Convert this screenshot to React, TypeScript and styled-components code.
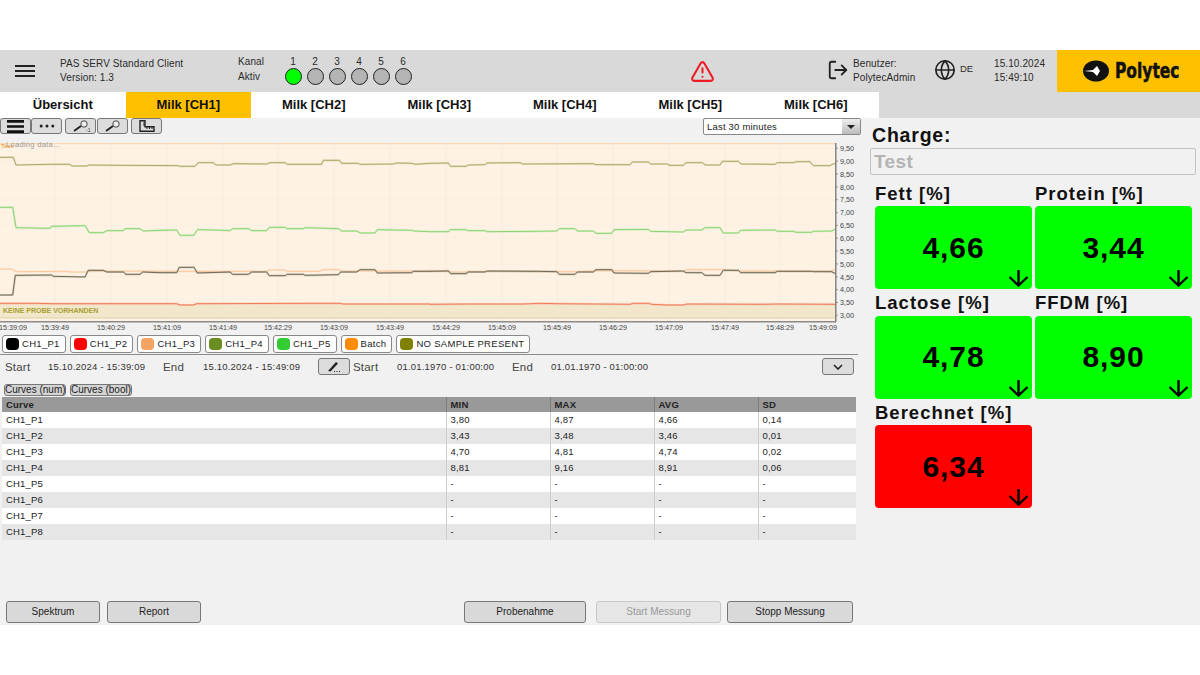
import React from 'react';
import styled, { createGlobalStyle } from 'styled-components';
import { LogOut, Globe, TriangleAlert } from 'lucide-react';

const GlobalStyle = createGlobalStyle`
  html, body {
    margin: 0;
    background: #fff;
    font-family: "Liberation Sans", Arial, sans-serif;
  }
  * { box-sizing: border-box; }
`;

const Frame = styled.div`
  width: 1200px;
  height: 575px;
  margin-top: 50px;
  background: #f1f1f1;
  display: flex;
  flex-direction: column;
  overflow: hidden;
`;

/* ---- header ---- */
const Header = styled.header`
  height: 42px;
  flex: none;
  display: flex;
  align-items: stretch;
  background: #d9d9d9;
  color: #2a2a2a;
  font-size: 10px;
  > * { flex: none; }
`;
const Burger = styled.div`
  width: 60px;
  padding: 15px 0 0 15px;
  span {
    display: block;
    width: 20px;
    height: 2px;
    background: #222;
    margin-bottom: 3px;
  }
`;
const InfoBlock = styled.div<{ $w: number; $pt?: number; $lh?: number }>`
  width: ${(p) => p.$w}px;
  padding-top: ${(p) => p.$pt ?? 7}px;
  line-height: ${(p) => p.$lh ?? 14}px;
  letter-spacing: 0.1px;
  white-space: nowrap;
`;
const Channels = styled.div`
  width: 132px;
  padding-top: 6px;
  display: grid;
  grid-template-columns: repeat(6, 22px);
  justify-content: start;
  align-content: start;
  justify-items: center;
  line-height: 12px;
`;
const Lamp = styled.i<{ $on?: boolean }>`
  display: block;
  width: 17px;
  height: 17px;
  border-radius: 50%;
  border: 1.5px solid #222;
  background: ${(p) => (p.$on ? '#00ff00' : '#b4b4b4')};
`;
const WarnSlot = styled.div`
  width: 413px;
  padding: 9px 0 0 276px;
  color: #ee1c25;
`;
const IconSlot = styled.div<{ $w: number; $pt: number }>`
  width: ${(p) => p.$w}px;
  padding-top: ${(p) => p.$pt}px;
  color: #222;
`;
const Lang = styled.div`
  width: 34px;
  padding-top: 13px;
  line-height: 12px;
  font-size: 9.5px;
`;
const Logo = styled.div`
  width: 143px;
  background: #ffc000;
  display: flex;
  align-items: center;
  padding-left: 26px;
  gap: 6px;
`;
const LogoText = styled.span`
  font-family: "DejaVu Sans Condensed", "DejaVu Sans", sans-serif;
  font-weight: 700;
  font-size: 21px;
  color: #111;
  -webkit-text-stroke: 0.5px #111;
  display: inline-block;
  transform: scaleX(0.82);
  transform-origin: left center;
`;

/* ---- tabs ---- */
const TabBar = styled.nav`
  height: 26px;
  flex: none;
  display: flex;
  background: #d9d9d9;
`;
const Tab = styled.div<{ $active?: boolean }>`
  width: 125.5px;
  background: ${(p) => (p.$active ? '#ffc000' : '#fff')};
  color: #111;
  font-weight: 700;
  font-size: 13px;
  text-align: center;
  line-height: 25px;
`;

/* ---- main ---- */
const Main = styled.main`
  flex: 1;
  display: flex;
  min-height: 0;
`;
const LeftCol = styled.section`
  width: 862px;
  flex: none;
  display: flex;
  flex-direction: column;
`;
const Toolbar = styled.div`
  height: 17px;
  flex: none;
  display: flex;
  justify-content: space-between;
`;
const ToolGroup = styled.div`
  display: flex;
`;
const ToolButton = styled.div<{ $gap?: number }>`
  width: 31px;
  height: 16px;
  margin-left: ${(p) => p.$gap ?? 0}px;
  border: 1px solid #777;
  border-radius: 3px;
  background: #dcdcdc;
  display: flex;
  align-items: center;
  justify-content: center;
`;
const SelectBox = styled.div`
  width: 158px;
  height: 17px;
  margin-right: 1px;
  border: 1px solid #888;
  border-radius: 2px;
  background: #fff;
  display: flex;
  justify-content: space-between;
  font-size: 9.5px;
  line-height: 15px;
  padding-left: 3px;
  color: #222;
  letter-spacing: 0.2px;
`;
const SelectArrow = styled.span`
  width: 18px;
  background: linear-gradient(#eee, #bbb);
  display: flex;
  align-items: center;
  justify-content: center;
  &::after {
    content: '';
    border: 4px solid transparent;
    border-top: 4px solid #222;
    border-bottom: 0;
  }
`;

/* ---- chart ---- */
const ChartBox = styled.div`
  position: relative;
  height: 200px;
  flex: none;
`;
const ChartSvg = styled.svg`
  display: block;
  text {
    font-family: "Liberation Sans", Arial, sans-serif;
  }
`;
const Loading = styled.span`
  position: absolute;
  left: 6px;
  top: 5px;
  font-size: 7.5px;
  color: #999;
  letter-spacing: 0.3px;
`;
const ChartTag = styled.span`
  position: absolute;
  left: 1px;
  top: 8px;
  font-size: 6px;
  font-weight: 700;
  color: #f6a545;
`;

/* ---- legend ---- */
const Legend = styled.div`
  height: 20px;
  flex: none;
  display: flex;
  align-items: flex-start;
  gap: 4px;
  padding-left: 2px;
  border-bottom: 1px solid #8c8c8c;
  width: 858px;
`;
const LegendItem = styled.div`
  height: 18px;
  padding: 0 5px 1px 3px;
  display: flex;
  align-items: center;
  gap: 3px;
  background: #fff;
  border: 1px solid #888;
  border-radius: 3px;
  font-size: 9.5px;
  letter-spacing: 0.3px;
  color: #222;
  white-space: nowrap;
`;
const Swatch = styled.i<{ $c: string }>`
  width: 13px;
  height: 12px;
  border-radius: 4px;
  background: ${(p) => p.$c};
`;

/* ---- range row ---- */
const RangeRow = styled.div`
  height: 25px;
  flex: none;
  display: flex;
  align-items: center;
  padding: 0 8px 2px 5px;
  color: #333;
`;
const RangeLabel = styled.span<{ $w: number }>`
  width: ${(p) => p.$w}px;
  font-size: 11.5px;
  color: #444;
  letter-spacing: 0.2px;
`;
const RangeValue = styled.span<{ $w: number }>`
  width: ${(p) => p.$w}px;
  font-size: 9.5px;
  letter-spacing: 0.2px;
  white-space: nowrap;
`;
const SmallButton = styled.div<{ $right?: boolean }>`
  width: 32px;
  height: 17px;
  margin-left: ${(p) => (p.$right ? 'auto' : '0')};
  margin-right: ${(p) => (p.$right ? '0' : '3px')};
  border: 1px solid #777;
  border-radius: 3px;
  background: #dcdcdc;
  display: flex;
  align-items: center;
  justify-content: center;
`;

/* ---- table ---- */
const CurveTabs = styled.div`
  height: 17px;
  flex: none;
  display: flex;
  align-items: flex-start;
  gap: 4px;
  padding: 4px 0 0 4px;
`;
const CurveTab = styled.div`
  height: 12px;
  width: 62px;
  border: 1px solid #777;
  border-radius: 3px;
  background: #d4d4d4;
  color: #222;
  font-size: 10px;
  line-height: 10px;
  text-align: center;
  white-space: nowrap;
`;
const Table = styled.table`
  width: 854px;
  margin-left: 2px;
  border-collapse: collapse;
  table-layout: fixed;
  font-size: 9.5px;
  color: #222;
  letter-spacing: 0.2px;
  th {
    height: 15px;
    padding: 0 0 0 4px;
    background: #999;
    text-align: left;
    font-weight: 700;
    border-left: 1px solid #7f7f7f;
  }
  td {
    height: 16px;
    padding: 0 0 2px 4px;
    border-left: 1px solid #ccc;
  }
  th:first-child, td:first-child { border-left: 0; }
  tbody tr:nth-child(odd) { background: #fff; }
  tbody tr:nth-child(even) { background: #e6e6e6; }
`;

/* ---- action bar ---- */
const Actions = styled.div`
  margin-top: auto;
  padding: 0 0 2px 6px;
  display: flex;
  align-items: center;
  width: 854px;
`;
const ActionButton = styled.div<{ $w: number; $off?: boolean; $ml?: number }>`
  width: ${(p) => p.$w}px;
  height: 22px;
  margin-left: ${(p) => p.$ml ?? 0}px;
  border: 1px solid ${(p) => (p.$off ? '#c8c8c8' : '#777')};
  border-radius: 3px;
  background: ${(p) => (p.$off ? '#e6e6e6' : '#d9d9d9')};
  color: ${(p) => (p.$off ? '#999' : '#222')};
  font-size: 10px;
  line-height: 20px;
  text-align: center;
`;

/* ---- right panel ---- */
const RightCol = styled.aside`
  flex: 1;
  padding: 6px 4px 0 8px;
`;
const ChargeTitle = styled.div`
  font-size: 19.5px;
  font-weight: 700;
  letter-spacing: 0.8px;
  color: #111;
  line-height: 22px;
  padding-left: 2px;
`;
const ChargeInput = styled.div`
  height: 27px;
  margin-top: 2px;
  border: 1px solid #c4c4c4;
  border-radius: 2px;
  font-size: 19px;
  font-weight: 700;
  color: #b4b4b4;
  line-height: 25px;
  padding-left: 3px;
  letter-spacing: 0.4px;
`;
const Cards = styled.div`
  margin-top: 4.5px;
  padding-left: 5px;
  display: grid;
  grid-template-columns: 157px 157px;
  column-gap: 3px;
`;
const Metric = styled.div``;
const MetricLabel = styled.div`
  height: 26.5px;
  line-height: 27px;
  font-size: 18.5px;
  font-weight: 700;
  letter-spacing: 1px;
  color: #111;
  white-space: nowrap;
`;
const MetricCard = styled.div<{ $c: string }>`
  position: relative;
  height: 83px;
  border-radius: 4px;
  background: ${(p) => p.$c};
  display: flex;
  align-items: center;
  justify-content: center;
  font-size: 30px;
  font-weight: 700;
  letter-spacing: 0.9px;
  color: #000;
`;
const DownArrow = styled.svg`
  position: absolute;
  right: 3px;
  bottom: 2px;
`;

/* ---- chart data, stepped traces measured in 3x px ---- */
type Pts = number[];
const shift = (p: Pts, dx: number) => p.map((v, i) => (i % 2 === 0 ? v + dx : v));
const toStr = (p: Pts) => {
  const out: string[] = [];
  for (let i = 0; i < p.length; i += 2) out.push(`${(p[i] / 3).toFixed(1)},${(p[i + 1] / 3).toFixed(1)}`);
  return out.join(' ');
};

const olive = [
  ...[0, 67, 40, 67, 48, 90, 150, 88, 210, 88, 215, 93, 260, 93, 268, 90, 370, 91, 535, 92, 540, 94, 585, 94, 595, 83, 640, 83, 648, 90, 690, 90, 700, 86, 800, 87, 810, 83, 855, 83, 862, 88, 965, 88, 970, 76, 1018, 76, 1025, 85, 1075, 85, 1080, 88, 1180, 87, 1190, 84, 1235, 85, 1245, 88],
  ...shift([0, 85, 55, 84, 62, 94, 108, 94, 115, 90, 165, 89, 170, 84, 270, 83, 278, 87, 490, 86, 498, 89, 600, 89, 607, 81, 655, 81, 662, 87, 712, 87, 718, 91, 760, 91, 768, 83, 818, 83, 825, 90, 870, 90, 877, 79, 925, 79, 933, 87, 1035, 88, 1042, 83, 1092, 83, 1098, 80, 1140, 80, 1150, 92, 1200, 92, 1208, 87, 1217, 86], 1290),
];
const green = [
  ...[0, 217, 38, 217, 48, 278, 150, 280, 155, 274, 255, 272, 268, 293, 310, 293, 320, 287, 370, 287, 375, 281, 420, 281, 430, 288, 480, 286, 530, 285, 540, 301, 582, 301, 592, 284, 640, 285, 690, 287, 698, 281, 745, 281, 755, 287, 800, 287, 808, 277, 855, 277, 862, 281, 910, 281, 915, 278, 1015, 281, 1025, 288, 1070, 288, 1080, 294, 1125, 294, 1132, 284, 1235, 286, 1242, 288],
  ...shift([0, 290, 55, 290, 62, 284, 108, 284, 115, 287, 165, 287, 172, 290, 325, 289, 380, 288, 388, 281, 435, 281, 442, 288, 490, 288, 498, 295, 545, 295, 552, 284, 655, 283, 662, 289, 760, 291, 768, 285, 815, 285, 825, 278, 870, 278, 880, 294, 925, 294, 932, 286, 1035, 285, 1042, 289, 1090, 289, 1098, 292, 1145, 292, 1150, 289, 1205, 288, 1212, 284, 1217, 284], 1290),
];
const dark = [
  ...[0, 480, 38, 480, 46, 421, 155, 420, 160, 424, 255, 426, 265, 406, 310, 406, 320, 411, 370, 411, 378, 418, 420, 418, 428, 411, 480, 413, 530, 413, 538, 397, 582, 397, 592, 414, 690, 411, 698, 418, 745, 418, 755, 411, 800, 411, 808, 422, 855, 422, 862, 418, 910, 418, 915, 421, 1015, 419, 1022, 411, 1070, 411, 1080, 404, 1125, 404, 1132, 414, 1235, 413, 1240, 409],
  ...shift([0, 409, 55, 408, 62, 416, 108, 416, 115, 411, 165, 411, 172, 408, 325, 409, 380, 410, 388, 418, 435, 418, 442, 411, 490, 411, 498, 404, 545, 404, 552, 414, 655, 415, 662, 410, 760, 408, 768, 413, 815, 413, 825, 421, 870, 421, 880, 406, 925, 406, 932, 413, 1035, 413, 1042, 409, 1145, 409, 1150, 410, 1205, 410, 1212, 414, 1217, 414], 1290),
];
const peach = [
  ...[0, 402, 35, 402, 48, 410, 200, 409, 210, 411, 260, 411, 270, 408, 530, 409, 800, 409, 808, 405, 855, 405, 862, 409, 960, 409, 968, 404, 1015, 404, 1025, 408, 1290, 408],
  ...shift([0, 407, 55, 407, 62, 411, 108, 411, 115, 409, 380, 410, 440, 410, 500, 407, 760, 408, 768, 404, 880, 404, 930, 408, 1205, 408, 1210, 404, 1217, 404], 1290),
];
const red = [
  ...[0, 505, 100, 505, 160, 506, 530, 506, 540, 510, 580, 510, 590, 506, 960, 505, 1020, 505, 1030, 507, 1290, 507],
  ...shift([0, 508, 110, 507, 280, 507, 330, 505, 380, 506, 500, 507, 600, 508, 610, 505, 655, 505, 665, 508, 715, 510, 760, 510, 770, 507, 1000, 508, 1040, 507, 1217, 508], 1290),
];

const xLabels: [number, string][] = [
  [13, '15:39:09'], [55, '15:39:49'], [111, '15:40:29'], [167, '15:41:09'], [223, '15:41:49'],
  [278, '15:42:29'], [334, '15:43:09'], [390, '15:43:49'], [446, '15:44:29'], [502, '15:45:09'],
  [557, '15:45:49'], [613, '15:46:29'], [669, '15:47:09'], [725, '15:47:49'], [780, '15:48:29'], [823, '15:49:09'],
];
const yLabels = ['9,50', '9,00', '8,50', '8,00', '7,50', '7,00', '6,50', '6,00', '5,50', '5,00', '4,50', '4,00', '3,50', '3,00'];

const Trace = ({ pts, core, halo }: { pts: Pts; core: string; halo: string }) => (
  <>
    <polyline points={toStr(pts)} fill="none" stroke={halo} strokeWidth={2.2} strokeOpacity={0.5} />
    <polyline points={toStr(pts)} fill="none" stroke={core} strokeWidth={0.9} />
  </>
);

const Chart = () => (
  <ChartSvg width={862} height={200} viewBox="0 0 862 200">
    <rect x={0} y={8} width={836} height={179} fill="#fef2e4" />
    <rect x={0} y={8} width={836} height={1.2} fill="#fbd9ac" />
    {Array.from({ length: 14 }, (_, i) => (
      <line key={i} x1={0} x2={836} y1={13.3 + i * 12.85} y2={13.3 + i * 12.85} stroke="#faecdb" strokeWidth={0.6} />
    ))}
    {xLabels.slice(1, 15).map(([x]) => (
      <line key={x} x1={x} x2={x} y1={8} y2={187} stroke="#f8eadb" strokeWidth={0.8} />
    ))}
    <rect x={0} y={169} width={836} height={14} fill="#f2e6cb" />
    <line x1={0} x2={836} y1={183} y2={183} stroke="#d8cd9c" strokeWidth={0.8} />
    <Trace pts={olive} core="#a3a35e" halo="#d3d3a4" />
    <Trace pts={green} core="#7fd268" halo="#bde8ac" />
    <Trace pts={peach} core="#f9c597" halo="#fbdcc0" />
    <Trace pts={dark} core="#625d4c" halo="#b9b29b" />
    <Trace pts={red} core="#ee7450" halo="#f7b09a" />
    <text x={3} y={178} fontSize={7} fontWeight={700} fill="#a9a030">KEINE PROBE VORHANDEN</text>
    <line x1={0} x2={836} y1={186.7} y2={186.7} stroke="#8a8a8a" strokeWidth={1.4} />
    <line x1={835.8} x2={835.8} y1={8} y2={187} stroke="#7d7d7d" strokeWidth={1.4} />
    {yLabels.map((t, i) => (
      <g key={t}>
        <line x1={836} x2={838} y1={13.3 + i * 12.85} y2={13.3 + i * 12.85} stroke="#777" strokeWidth={0.7} />
        <text x={840} y={16 + i * 12.85} fontSize={7.2} fill="#444">{t}</text>
      </g>
    ))}
    {xLabels.map(([x, t]) => (
      <text key={t} x={x} y={195} textAnchor="middle" fontSize={7.2} fill="#444">{t}</text>
    ))}
  </ChartSvg>
);

/* ---- small hand-drawn icons ---- */
const Magnifier = ({ tag }: { tag?: string }) => (
  <svg width="20" height="14" viewBox="0 0 20 14">
    <line x1="3" y1="12" x2="10" y2="7" stroke="#222" strokeWidth="2" />
    <circle cx="13" cy="5" r="3.2" fill="#eee" stroke="#444" strokeWidth="1" />
    {tag && <text x="15" y="13" fontSize="5" fill="#333" fontFamily="Liberation Sans">{tag}</text>}
  </svg>
);
const BarsIcon = () => (
  <svg width="17" height="13" viewBox="0 0 17 13">
    <path d="M0 1.4h17M0 6.5h17M0 11.6h17" stroke="#111" strokeWidth="2.6" />
  </svg>
);
const DotsIcon = () => (
  <svg width="16" height="4" viewBox="0 0 16 4">
    <circle cx="2.2" cy="2" r="1.5" fill="#222" />
    <circle cx="8" cy="2" r="1.5" fill="#222" />
    <circle cx="13.8" cy="2" r="1.5" fill="#222" />
  </svg>
);
const RulerIcon = () => (
  <svg width="16" height="12" viewBox="0 0 16 12">
    <path d="M1 .8h5v6h9v4.4H1z" fill="none" stroke="#222" strokeWidth="1.4" />
    <path d="M8 7v2M10.5 7v2M13 7v2M6 3H4M6 5H4" stroke="#222" strokeWidth="1" />
  </svg>
);
const PenIcon = () => (
  <svg width="16" height="13" viewBox="0 0 16 13">
    <path d="M2 11 L10 2 L12 3.5 L4.5 11.5 Z" fill="#222" />
    <path d="M8 11.5h1M10.5 11.5h1M13 11.5h1" stroke="#222" strokeWidth="1.2" />
  </svg>
);
const LogoMark = () => (
  <svg width="26" height="22" viewBox="0 0 26 22">
    <ellipse cx="13" cy="11" rx="13" ry="10.5" fill="#111" />
    <path d="M1 11 L10 10 L14 6 L17 11 L14 16 L10 12 Z" fill="#fff" />
  </svg>
);
const Arrow = () => (
  <DownArrow width="21" height="18" viewBox="0 0 21 18">
    <path d="M10.5 1v15M1.5 8l9 8.5 9-8.5" fill="none" stroke="#000" strokeWidth="2.4" />
  </DownArrow>
);

const tabs = ['Übersicht', 'Milk [CH1]', 'Milk [CH2]', 'Milk [CH3]', 'Milk [CH4]', 'Milk [CH5]', 'Milk [CH6]'];
const legend: [string, string][] = [
  ['CH1_P1', '#000000'], ['CH1_P2', '#ff0000'], ['CH1_P3', '#f4a460'], ['CH1_P4', '#6b8e23'],
  ['CH1_P5', '#32cd32'], ['Batch', '#ff8c00'], ['NO SAMPLE PRESENT', '#808000'],
];
const rows = [
  ['CH1_P1', '3,80', '4,87', '4,66', '0,14'],
  ['CH1_P2', '3,43', '3,48', '3,46', '0,01'],
  ['CH1_P3', '4,70', '4,81', '4,74', '0,02'],
  ['CH1_P4', '8,81', '9,16', '8,91', '0,06'],
  ['CH1_P5', '-', '-', '-', '-'],
  ['CH1_P6', '-', '-', '-', '-'],
  ['CH1_P7', '-', '-', '-', '-'],
  ['CH1_P8', '-', '-', '-', '-'],
];
const metrics: [string, string, string][] = [
  ['Fett [%]', '4,66', '#00ff00'],
  ['Protein [%]', '3,44', '#00ff00'],
  ['Lactose [%]', '4,78', '#00ff00'],
  ['FFDM [%]', '8,90', '#00ff00'],
  ['Berechnet [%]', '6,34', '#ff0000'],
];

const App = () => (
  <>
    <GlobalStyle />
    <Frame>
      <Header>
        <Burger><span /><span /><span /></Burger>
        <InfoBlock $w={178}>PAS SERV Standard Client<br />Version: 1.3</InfoBlock>
        <InfoBlock $w={44} $pt={4} $lh={15}>Kanal<br />Aktiv</InfoBlock>
        <Channels>
          {[1, 2, 3, 4, 5, 6].map((n) => <span key={n}>{n}</span>)}
          {[1, 2, 3, 4, 5, 6].map((n) => <Lamp key={n} $on={n === 1} />)}
        </Channels>
        <WarnSlot><TriangleAlert size={25} strokeWidth={2} /></WarnSlot>
        <IconSlot $w={26} $pt={9}><LogOut size={22} strokeWidth={2} /></IconSlot>
        <InfoBlock $w={81}>Benutzer:<br />PolytecAdmin</InfoBlock>
        <IconSlot $w={26} $pt={9}><Globe size={22} strokeWidth={1.8} /></IconSlot>
        <Lang>DE</Lang>
        <InfoBlock $w={63}>15.10.2024<br />15:49:10</InfoBlock>
        <Logo><LogoMark /><LogoText>Polytec</LogoText></Logo>
      </Header>

      <TabBar>
        {tabs.map((t, i) => <Tab key={t} $active={i === 1}>{t}</Tab>)}
      </TabBar>

      <Main>
        <LeftCol>
          <Toolbar>
            <ToolGroup>
              <ToolButton><BarsIcon /></ToolButton>
              <ToolButton><DotsIcon /></ToolButton>
              <ToolButton $gap={3}><Magnifier tag="-1" /></ToolButton>
              <ToolButton $gap={1}><Magnifier /></ToolButton>
              <ToolButton $gap={3}><RulerIcon /></ToolButton>
            </ToolGroup>
            <SelectBox>Last 30 minutes<SelectArrow /></SelectBox>
          </Toolbar>

          <ChartBox>
            <Chart />
            <ChartTag>Test</ChartTag>
            <Loading>Loading data...</Loading>
          </ChartBox>

          <Legend>
            {legend.map(([n, c]) => (
              <LegendItem key={n}><Swatch $c={c} />{n}</LegendItem>
            ))}
          </Legend>

          <RangeRow>
            <RangeLabel $w={43}>Start</RangeLabel>
            <RangeValue $w={115}>15.10.2024 - 15:39:09</RangeValue>
            <RangeLabel $w={40}>End</RangeLabel>
            <RangeValue $w={115}>15.10.2024 - 15:49:09</RangeValue>
            <SmallButton><PenIcon /></SmallButton>
            <RangeLabel $w={44}>Start</RangeLabel>
            <RangeValue $w={115}>01.01.1970 - 01:00:00</RangeValue>
            <RangeLabel $w={39}>End</RangeLabel>
            <RangeValue $w={115}>01.01.1970 - 01:00:00</RangeValue>
            <SmallButton $right>
              <svg width="10" height="6" viewBox="0 0 10 6"><path d="M1 1l4 4 4-4" fill="none" stroke="#222" strokeWidth="1.6" /></svg>
            </SmallButton>
          </RangeRow>

          <CurveTabs>
            <CurveTab>Curves (num)</CurveTab>
            <CurveTab>Curves (bool)</CurveTab>
          </CurveTabs>

          <Table>
            <colgroup>
              <col style={{ width: 444 }} />
              <col style={{ width: 104 }} />
              <col style={{ width: 104 }} />
              <col style={{ width: 104 }} />
              <col />
            </colgroup>
            <thead>
              <tr><th>Curve</th><th>MIN</th><th>MAX</th><th>AVG</th><th>SD</th></tr>
            </thead>
            <tbody>
              {rows.map((r) => (
                <tr key={r[0]}>{r.map((c, i) => <td key={i}>{c}</td>)}</tr>
              ))}
            </tbody>
          </Table>

          <Actions>
            <ActionButton $w={94}>Spektrum</ActionButton>
            <ActionButton $w={94} $ml={7}>Report</ActionButton>
            <ActionButton $w={122} $ml={263}>Probenahme</ActionButton>
            <ActionButton $w={125} $ml={10} $off>Start Messung</ActionButton>
            <ActionButton $w={126} $ml={6}>Stopp Messung</ActionButton>
          </Actions>
        </LeftCol>

        <RightCol>
          <ChargeTitle>Charge:</ChargeTitle>
          <ChargeInput>Test</ChargeInput>
          <Cards>
            {metrics.map(([label, value, color]) => (
              <Metric key={label}>
                <MetricLabel>{label}</MetricLabel>
                <MetricCard $c={color}>{value}<Arrow /></MetricCard>
              </Metric>
            ))}
          </Cards>
        </RightCol>
      </Main>
    </Frame>
  </>
);

export default App;
